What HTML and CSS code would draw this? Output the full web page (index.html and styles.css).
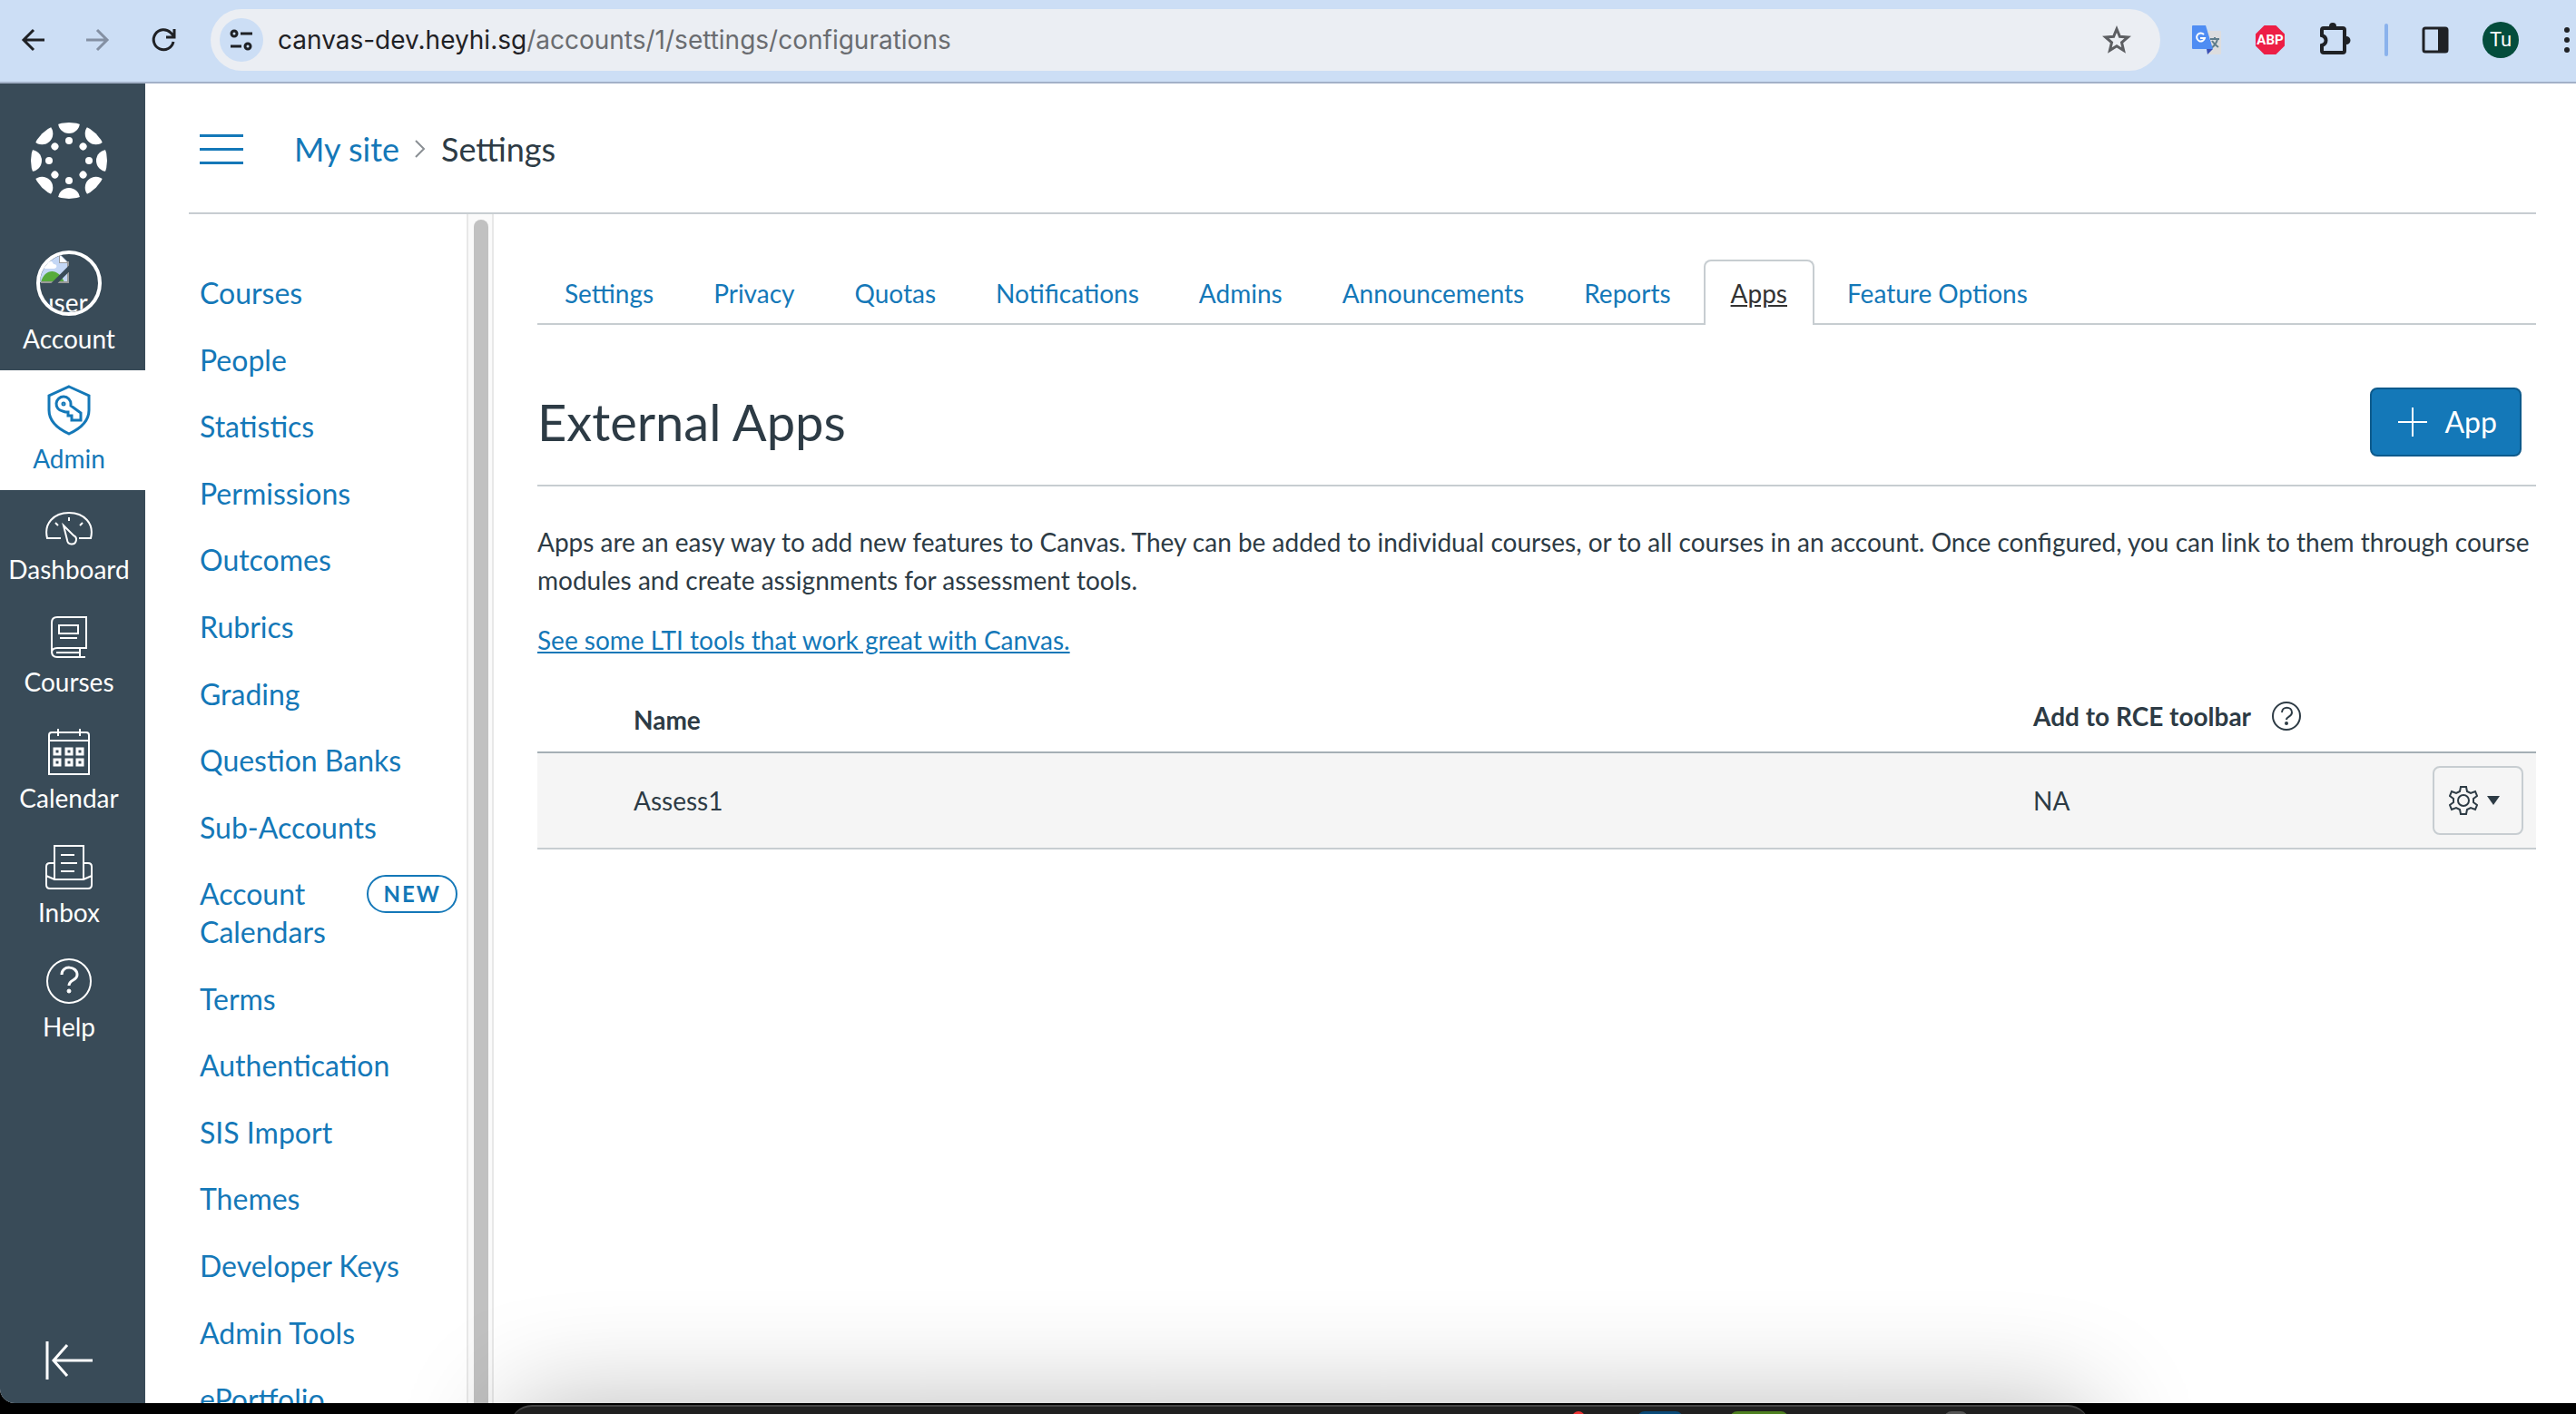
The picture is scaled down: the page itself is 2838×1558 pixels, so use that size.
FILE: index.html
```html
<!DOCTYPE html>
<html lang="en">
<head>
<meta charset="utf-8">
<title>Settings - External Apps</title>
<link rel="stylesheet" href="styles.css">
</head>
<body>
<div class="screen">
  <div class="window">
    <div class="toolbar">
      <div class="toolbar-nav">
        <button class="tool" aria-label="Back"><svg width="32" height="32" viewBox="0 0 32 32" fill="none" stroke="#1f2125" stroke-width="3"><path d="M29 16H6M17 5L6 16l11 11"/></svg></button>
        <button class="tool" aria-label="Forward"><svg width="32" height="32" viewBox="0 0 32 32" fill="none" stroke="#8490a3" stroke-width="3"><path d="M3 16h23M15 5l11 11-11 11"/></svg></button>
        <button class="tool" aria-label="Reload"><svg width="32" height="32" viewBox="0 0 32 32" fill="none" stroke="#1f2125" stroke-width="3"><path d="M27 18a11 11 0 1 1-3-10l3 3M28 4v9h-9"/></svg></button>
      </div>
      <div class="omnibox">
        <button class="site-info" aria-label="Site information"><svg width="28" height="28" viewBox="0 0 28 28" fill="none" stroke="#1f2125" stroke-width="3"><circle cx="6" cy="7" r="3"/><path d="M13 7h13M2 21h12"/><circle cx="21" cy="21" r="3"/></svg></button>
        <div class="url"><span class="host">canvas-dev.heyhi.sg</span>/accounts/1/settings/configurations</div>
        <button class="tool" aria-label="Bookmark"><svg width="32" height="32" viewBox="0 0 32 32" fill="none" stroke="#5c5e62" stroke-width="3"><path d="M16 4l3.400 8.300 8.900.700-6.800 5.800 2.100 8.700L16 22.800l-7.600 4.700 2.100-8.700L3.700 13l8.900-.700z"/></svg></button>
      </div>
      <div class="extensions">
        <button class="tool" aria-label="Translate"><svg width="34" height="34" viewBox="0 0 34 34"><path d="M16 7h16a1 1 0 0 1 1 1v24a1 1 0 0 1-1 1H19z" fill="#dcdddf"/><path d="M21 16h10M26 14v2M29 16c-1 5-4 8-7 10M23 18c2 3 4 5 7 7" stroke="#607d8b" stroke-width="2" fill="none"/><path d="M17 27h7l-6 6z" fill="#3a50b5"/><path d="M2 1h14l8 26H2a1 1 0 0 1-1-1V2a1 1 0 0 1 1-1z" fill="#4f8df3"/><path d="M14 11a4.500 4.500 0 1 0 1 4h-5" stroke="#fff" stroke-width="2" fill="none"/></svg></button>
        <button class="tool abp" aria-label="Adblock Plus">ABP</button>
        <button class="tool" aria-label="Extensions"><svg width="36" height="38" viewBox="0 0 36 38"><path d="M6 6h21q2 0 2 2v23q0 2-2 2H6q-2 0-2-2v-6c6-2 6-9 0-11V8q0-2 2-2z" fill="none" stroke="#1f2125" stroke-width="4"/><path d="M12 4a4 4 0 0 1 8 0zM31 15a4 4 0 0 1 0 9z" fill="#1f2125"/></svg></button>
        <span class="divider"></span>
        <button class="tool" aria-label="Side panel"><svg width="30" height="30" viewBox="0 0 30 30"><rect x="2" y="2" width="26" height="26" rx="2" fill="none" stroke="#1f2125" stroke-width="3"/><path d="M18 2h10v26H18z" fill="#1f2125"/></svg></button>
        <button class="tool profile" aria-label="Profile">Tu</button>
        <button class="tool" aria-label="Menu"><svg width="8" height="32" viewBox="0 0 8 32" fill="#1f2125"><circle cx="4" cy="5" r="3"/><circle cx="4" cy="16" r="3"/><circle cx="4" cy="27" r="3"/></svg></button>
      </div>
    </div>

    <div class="app">
      <nav class="global-nav" aria-label="Global navigation">
        <a href="#" class="logo" aria-label="Home"><svg width="84" height="84" viewBox="-42 -42 84 84" fill="#fff"><defs><clipPath id="ring"><circle r="42"/></clipPath><g id="seg"><circle cy="-42" r="12"/><circle cy="-22" r="4"/></g></defs><g clip-path="url(#ring)"><use href="#seg"/><use href="#seg" transform="rotate(45)"/><use href="#seg" transform="rotate(90)"/><use href="#seg" transform="rotate(135)"/><use href="#seg" transform="rotate(180)"/><use href="#seg" transform="rotate(225)"/><use href="#seg" transform="rotate(270)"/><use href="#seg" transform="rotate(315)"/></g></svg></a>
        <a href="#" class="global-item"><span class="avatar"><svg width="32" height="32" viewBox="0 0 32 32"><path d="M0 0h22l9 9v22H0z" fill="#c4d7f5"/><path d="M5 13c0-6 8-8 10-2 5 0 4 5 0 5H6c-3 0-3-3-1-3z" fill="#fff"/><path d="M1 31c4-15 19-17 26 0z" fill="#57ab3c"/><path d="M22 0v9h9v22H1" fill="none" stroke="#999" stroke-width="2"/><path d="M22 1l8 8h-8z" fill="#fff"/><path d="M34 14L14 34" stroke="#394b58" stroke-width="5"/></svg><span class="avatar-alt">user</span></span><span>Account</span></a>
        <a href="#" class="global-item active"><svg width="48" height="56" viewBox="0 0 48 56" fill="none" stroke="#1478b8" stroke-width="3"><path d="M24 2l22 10v16c0 12-9 20-22 26C11 48 2 40 2 28V12z"/><path d="M26 21a8 8 0 1 0-9 8l3 1h3v4h4v5h10v-8L26 23z"/><circle cx="18" cy="21" r="1"/></svg><span>Admin</span></a>
        <a href="#" class="global-item"><svg width="54" height="46" viewBox="0 0 54 46" fill="none" stroke="#fff" stroke-width="2"><path d="M18 37H3C-1 21 10 9 27 9s28 12 24 28H38M27 14v4M12 20l3 3M42 20l-3 3"/><path d="M21 23l11 11a5 5 0 1 1-7 5z"/></svg><span>Dashboard</span></a>
        <a href="#" class="global-item"><svg width="42" height="48" viewBox="0 0 42 48" fill="none" stroke="#fff" stroke-width="2"><path d="M39 46H8q-6 0-6-6V8q0-6 6-6h32v34H8q-6 0-6 5M33 37v9M7 41h26M11 25h19"/><path d="M10 11h21v9H10z"/></svg><span>Courses</span></a>
        <a href="#" class="global-item"><svg width="46" height="52" viewBox="0 0 46 52" fill="none" stroke="#fff" stroke-width="2"><path d="M1 51V8q0-3 3-3h38q3 0 3 3v43zM1 14h44M11 1v8M35 1v8"/><path stroke-width="3" d="M7 23h6v6H7zM20 23h6v6h-6zM32 23h6v6h-6zM7 35h6v6H7zM20 35h6v6h-6zM32 35h6v6h-6z"/></svg><span>Calendar</span></a>
        <a href="#" class="global-item"><svg width="52" height="50" viewBox="0 0 52 50" fill="none" stroke="#fff" stroke-width="2"><path d="M10 21H5q-4 0-4 4v20q0 4 4 4h42q4 0 4-4V25q0-4-4-4h-5M1 35l9 4h32l9-4"/><path d="M10 39V2h32v37M17 12h15M17 21h18M17 30h15"/></svg><span>Inbox</span></a>
        <a href="#" class="global-item"><svg width="50" height="50" viewBox="0 0 50 50" fill="none" stroke="#fff" stroke-width="2"><circle cx="25" cy="25" r="24"/><path stroke-width="3" d="M17 18c0-11 17-10 17 0 0 7-9 5-9 12"/><circle cx="25" cy="36" r="2" fill="#fff" stroke-width="1"/></svg><span>Help</span></a>
        <button class="collapse" aria-label="Minimize navigation"><svg width="54" height="42" viewBox="0 0 54 42" fill="none" stroke="#fff" stroke-width="3"><path d="M2 0v42M52 21H9M24 4L9 21l15 17"/></svg></button>
      </nav>

      <div class="content">
        <header class="page-header">
          <button class="menu-toggle" aria-label="Course menu"><span></span><span></span><span></span></button>
          <div class="crumbs"><a href="#">My site</a><svg width="14" height="20" viewBox="0 0 14 20" fill="none" stroke="#8a8f94" stroke-width="2"><path d="M2 1l9 9-9 9"/></svg><span>Settings</span></div>
        </header>

        <div class="columns">
          <nav class="side-nav" aria-label="Account navigation">
            <div class="side-links">
              <a href="#">Courses</a>
              <a href="#">People</a>
              <a href="#">Statistics</a>
              <a href="#">Permissions</a>
              <a href="#">Outcomes</a>
              <a href="#">Rubrics</a>
              <a href="#">Grading</a>
              <a href="#">Question Banks</a>
              <a href="#">Sub-Accounts</a>
              <a href="#" class="with-badge"><span>Account Calendars</span><span class="badge">NEW</span></a>
              <a href="#">Terms</a>
              <a href="#">Authentication</a>
              <a href="#">SIS Import</a>
              <a href="#">Themes</a>
              <a href="#">Developer Keys</a>
              <a href="#">Admin Tools</a>
              <a href="#">ePortfolio</a>
            </div>
            <div class="scroll-track"><div class="scroll-thumb"></div></div>
          </nav>

          <main class="main">
            <nav class="tabs" aria-label="Settings sections">
              <a href="#">Settings</a>
              <a href="#">Privacy</a>
              <a href="#">Quotas</a>
              <a href="#">Notifications</a>
              <a href="#">Admins</a>
              <a href="#">Announcements</a>
              <a href="#">Reports</a>
              <a href="#" class="current">Apps</a>
              <a href="#">Feature Options</a>
            </nav>
            <div class="title-row">
              <h1>External Apps</h1>
              <button class="add-app"><svg width="32" height="32" viewBox="0 0 32 32" stroke="#fff" stroke-width="2"><path d="M16 0v32M0 16h32"/></svg>App</button>
            </div>
            <p class="intro">Apps are an easy way to add new features to Canvas. They can be added to individual courses, or to all courses in an account. Once configured, you can link to them through course modules and create assignments for assessment tools.</p>
            <p class="more"><a href="#">See some LTI tools that work great with Canvas.</a></p>
            <table class="apps">
              <thead>
                <tr><th class="name" scope="col">Name</th><th class="rce" scope="col"><div class="rce-head">Add to RCE toolbar<svg width="34" height="34" viewBox="0 0 34 34" fill="none" stroke="#2d3b45" stroke-width="2"><circle cx="17" cy="17" r="15"/><path d="M12 13c0-7 11-7 11 0 0 5-6 4-6 8"/><circle cx="17" cy="25" r="1"/></svg></div></th><td class="actions"></td></tr>
              </thead>
              <tbody>
                <tr><td class="name">Assess1</td><td>NA</td><td class="actions"><button class="gear" aria-label="Assess1 options"><svg width="32" height="34" viewBox="-16 -17 32 34" fill="none" stroke="#2d3b45" stroke-width="2"><path d="M-3-15H3L4-10 8-8 13-10 15-5 11-2V2L15 5 13 10 8 8 4 10 3 15H-3L-4 10-8 8-13 10-15 5-11 2V-2L-15-5-13-10-8-8-4-10z"/><circle r="6"/></svg><svg width="14" height="10" viewBox="0 0 14 10"><path d="M0 0h14L7 10z" fill="#2d3b45"/></svg></button></td></tr>
              </tbody>
            </table>
          </main>
        </div>
      </div>
    </div>
  </div>
  <div class="desktop-edge">
    <div class="dock">
      <span class="dock-icon red"></span><span class="dock-icon blue"></span><span class="dock-icon green"></span><span class="dock-icon gray"></span>
    </div>
  </div>
</div>
</body>
</html>
```
FILE: styles.css
```css
* { box-sizing: border-box; }

body {
  margin: 0;
  background: #000;
  color: #2d3b45;
  font: 28px/1.5 Lato, "Liberation Sans", sans-serif;
}

a { color: #1478b8; text-decoration: none; }

button {
  margin: 0;
  padding: 0;
  border: 0;
  background: none;
  font: inherit;
}

svg { display: block; flex: none; }

.screen {
  display: flex;
  flex-direction: column;
  height: 100vh;
  overflow: hidden;
}

.window {
  display: flex;
  flex: 1;
  flex-direction: column;
  min-height: 0;
  overflow: hidden;
  border-bottom-left-radius: 16px;
  background: #fff;
}

/* Browser toolbar */
.toolbar {
  display: flex;
  flex: none;
  align-items: center;
  height: 92px;
  padding: 0 6px 2px 20px;
  border-bottom: 2px solid #a3b1c8;
  background: #ccdef5;
}

.toolbar-nav { display: flex; gap: 40px; margin-right: 36px; }

.omnibox {
  display: flex;
  flex: 1;
  align-items: center;
  height: 68px;
  padding: 0 32px 0 10px;
  border-radius: 34px;
  background: #ebeef3;
}

.site-info {
  display: grid;
  place-items: center;
  width: 48px;
  height: 48px;
  margin-right: 16px;
  border-radius: 50%;
  background: #ccdef5;
}

.url { flex: 1; color: #6a6c70; font: 28px/40px Inter, sans-serif; }
.host { color: #1f2125; }

.extensions { display: flex; align-items: center; gap: 37px; margin-left: 34px; }
.extensions .divider { width: 4px; height: 36px; border-radius: 2px; background: #8ab2ec; }

.extensions .abp {
  width: 32px;
  height: 32px;
  clip-path: polygon(30% 0, 70% 0, 100% 30%, 100% 70%, 70% 100%, 30% 100%, 0 70%, 0 30%);
  background: #ed1e45;
  color: #fff;
  font: bold 15px/32px Roboto, sans-serif;
}

.extensions .profile {
  width: 40px;
  height: 40px;
  margin-right: 12px;
  border-radius: 50%;
  background: #044d3c;
  color: #fff;
  font: 22px/40px Roboto, sans-serif;
}

/* Page shell */
.app { display: flex; flex: 1; min-height: 0; }

.global-nav {
  display: flex;
  flex: none;
  flex-direction: column;
  width: 160px;
  padding-right: 8px;
  background: #394b58;
}

.logo { display: flex; justify-content: center; padding: 43px 0 41px; }

.global-item {
  display: flex;
  flex-direction: column;
  align-items: center;
  gap: 8px;
  padding: 16px 0 18px;
  color: #fff;
  line-height: 34px;
}

.global-item.active {
  margin-right: -8px;
  padding-right: 8px;
  background: #fff;
  color: #1478b8;
}

.avatar {
  width: 72px;
  height: 72px;
  overflow: hidden;
  border: 4px solid #fff;
  border-radius: 50%;
}

.avatar-alt { display: block; line-height: 42px; }

.collapse { margin: auto auto 26px 50px; }

.content {
  display: flex;
  flex: 1;
  flex-direction: column;
  min-width: 0;
  padding: 0 44px 0 48px;
}

.page-header {
  display: flex;
  flex: none;
  align-items: center;
  gap: 56px;
  height: 144px;
  padding: 2px 0 0 12px;
  border-bottom: 2px solid #c7cdd1;
}

.menu-toggle { display: grid; gap: 12px; width: 48px; }
.menu-toggle span { height: 3px; background: #1478b8; }

.crumbs { display: flex; align-items: center; gap: 16px; font-size: 36px; }

.columns { display: flex; flex: 1; min-height: 0; }

.side-nav { display: flex; flex: none; width: 336px; overflow: hidden; }

.side-links {
  flex: 1;
  padding: 50px 10px 0 12px;
  font-size: 32px;
  line-height: 1.3;
}

.side-links a { display: block; padding: 16px 0; }
.side-links .with-badge { display: flex; justify-content: space-between; align-items: flex-start; }

.badge {
  height: 42px;
  padding: 0 16px;
  border: 2px solid #1478b8;
  border-radius: 21px;
  font-size: 24px;
  font-weight: bold;
  line-height: 38px;
  letter-spacing: 2px;
}

.scroll-track {
  width: 30px;
  padding: 6px 4px 0 6px;
  border: solid #e8e8e8;
  border-width: 0 2px;
  background: #fafafa;
}

.scroll-thumb { height: 100%; border-radius: 8px 8px 0 0; background: #c1c1c1; }

.main { flex: 1; min-width: 0; padding: 50px 0 0 48px; }

/* Tabs */
.tabs { display: flex; gap: 6px; border-bottom: 2px solid #c7cdd1; }

.tabs a {
  margin-bottom: -2px;
  padding: 14px 28px;
  border: 2px solid transparent;
  border-bottom: 0;
  border-radius: 8px 8px 0 0;
  line-height: 42px;
}

.tabs .current {
  border-color: #c7cdd1;
  background: #fff;
  color: #333;
  text-decoration: underline;
}

/* External apps */
.title-row {
  display: flex;
  align-items: center;
  justify-content: space-between;
  padding: 69px 16px 31px 0;
  border-bottom: 2px solid #c7cdd1;
}

h1 { margin: 0; font-size: 56px; font-weight: 400; line-height: 76px; }

.add-app {
  display: flex;
  align-items: center;
  gap: 20px;
  height: 76px;
  padding: 0 25px 0 29px;
  border: 2px solid #0d5a8c;
  border-radius: 8px;
  background: #1478b8;
  color: #fff;
  font-size: 32px;
}

.intro { margin: 40px 0 24px; }
.more { margin: 0 0 24px; }
.more a { text-decoration: underline; }

.apps { width: 100%; border-collapse: collapse; table-layout: fixed; text-align: left; }
.apps th { padding: 18px 0 18px; font-weight: bold; }
.apps th.name { padding: 22px 0 14px 106px; }
.apps .name { padding-left: 106px; }
.apps .rce { width: 400px; }
.apps td.actions { width: 154px; padding-right: 14px; }
.apps thead tr { border-bottom: 2px solid #a5afb5; }
.apps tbody tr { height: 106px; border-bottom: 2px solid #c7cdd1; background: #f5f5f5; }
.apps td { padding: 0; }

.rce-head { display: flex; align-items: center; gap: 22px; }

.gear {
  display: flex;
  align-items: center;
  gap: 10px;
  width: 100px;
  height: 76px;
  margin-left: auto;
  padding-left: 16px;
  border: 2px solid #c7cdd1;
  border-radius: 8px;
}

/* Strip of desktop and dock under the window */
.desktop-edge { flex: none; height: 12px; padding: 2px 536px 0 562px; background: #000; }

/* The dock continues below the bottom of the screen */
.dock {
  display: flex;
  justify-content: flex-end;
  height: 140px;
  padding: 5px 134px 0 0;
  border-top: 2px solid #444;
  border-radius: 24px 24px 0 0;
  background: #202020;
  box-shadow: 0 0 120px rgba(0, 0, 0, 0.28);
}

.dock-icon { height: 50px; border-radius: 8px 8px 0 0; }
.red { width: 14px; margin-right: 58px; background: #e33; }
.blue { width: 50px; margin-right: 52px; background: #0a4a78; }
.green { width: 64px; margin-right: 172px; background: #4e8020; }
.gray { width: 26px; background: #555; }
```
